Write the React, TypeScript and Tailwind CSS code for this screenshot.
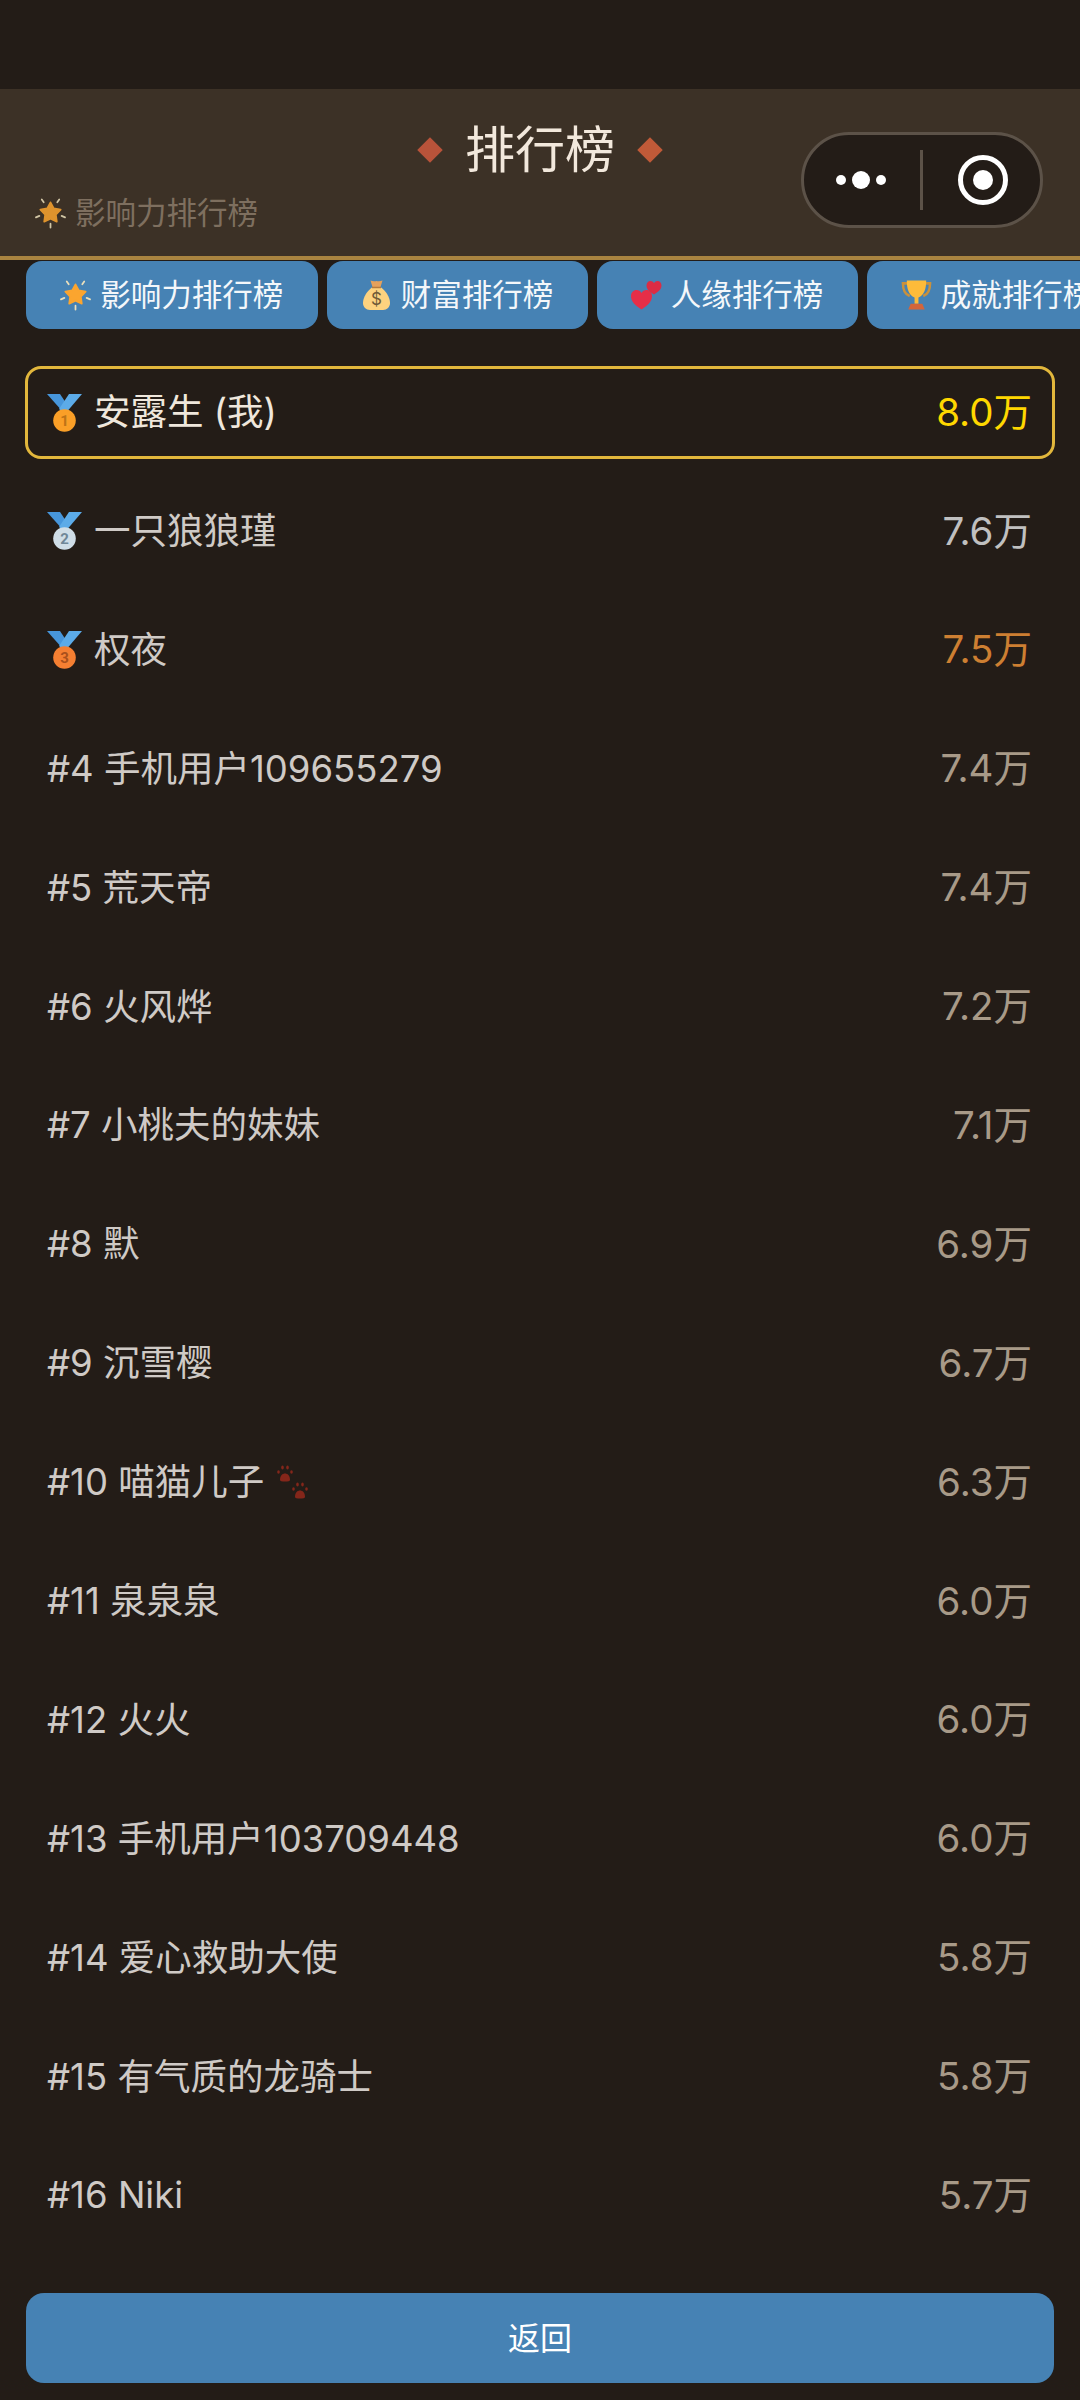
import type { ReactNode } from 'react';

const FONT = "font-['Inter','Noto_Sans_CJK_SC',sans-serif]";

function StarIcon() {
  return (
    <svg width={31} height={32} viewBox="0 0 32 32" className="shrink-0">
      <path
        d="M16 5l3.400 6.300 7.100 1.300-5 5.200 1 7.100L16 21.800l-6.500 3.100 1-7.100-5-5.200 7.100-1.300z"
        fill="#fba52f"
        stroke="#fba52f"
        strokeWidth="1.800"
        strokeLinejoin="round"
      />
      <g stroke="#ece0bc" strokeWidth="1.800" strokeLinecap="round">
        <path d="M7 2l2 3" />
        <path d="M25 2l-2 3" />
        <path d="M1 20.500l3.500-1.500" />
        <path d="M31 20.500L27.500 19" />
        <path d="M16 27v4" />
      </g>
    </svg>
  );
}

function BagIcon() {
  return (
    <svg width={31} height={32} viewBox="0 0 31 32" className="shrink-0">
      <path d="M9.500 1.500c2 .8 4 .8 6 .5 2 .3 4 .3 6-.5L19.500 8h-8z" fill="#e5a15c" />
      <path d="M11.500 8h8c5 3.500 9.500 10 9.500 16 0 4-3 7-7 7H9c-4 0-7-3-7-7 0-6 4.500-12.500 9.500-16z" fill="#fdd27f" />
      <path d="M11 8.500h9" stroke="#b57a3d" strokeWidth="1.500" />
      <text x="15.500" y="26" textAnchor="middle" fontSize="17" fill="#6f5a38" fontFamily="Inter, sans-serif">$</text>
    </svg>
  );
}

function HeartsIcon() {
  return (
    <svg width={31} height={32} viewBox="0 0 31 32" className="shrink-0">
      <path d="M10.500 30.500C4.500 26.500 0 23 0 17c0-3.600 2.600-6 5.500-6 2.200 0 4 1 5 3 1-2 2.800-3 5-3 2.900 0 5.500 2.400 5.500 6 0 6-4.500 9.500-10.500 13.500z" fill="#e62e48" />
      <path d="M23 15.500c-4-2.600-7.500-5-7.500-9 0-2.500 1.800-4.500 3.900-4.500 1.600 0 2.800.8 3.600 2.200.8-1.400 2-2.200 3.600-2.200 2.100 0 3.900 2 3.900 4.500 0 4-3.500 6.400-7.500 9z" fill="#dc2c44" />
    </svg>
  );
}

function TrophyIcon() {
  return (
    <svg width={31} height={32} viewBox="0 0 32 32" className="shrink-0">
      <path d="M8 4H2c0 7 1.500 11 7 13M24 4h6c0 7-1.500 11-7 13" fill="none" stroke="#c9913c" strokeWidth="2.600" />
      <path d="M6 1h20c0 9-2 15-8 17.500V25h-4v-6.500C8 16 6 10 6 1z" fill="#fdbb3a" />
      <path d="M10 25h12l2.500 6h-17z" fill="#d4653a" />
    </svg>
  );
}

function MedalIcon({ place }: { place: 1 | 2 | 3 }) {
  const disc = { 1: '#fa9f27', 2: '#cfdde6', 3: '#f57f32' }[place];
  const digit = { 1: '#bd7417', 2: '#6f8797', 3: '#a9501c' }[place];
  return (
    <svg width={35} height={38} viewBox="0 0 35 38" className="shrink-0">
      <path d="M0 0h13l6 9-3 9z" fill="#4796db" />
      <path d="M35 0H22L12 15l6 5z" fill="#5cabe8" />
      <circle cx="17.500" cy="26.500" r="11.300" fill={disc} />
      <text x="17.500" y="32" textAnchor="middle" fontSize="15" fontWeight="700" fill={digit} fontFamily="Roboto, sans-serif">{place}</text>
    </svg>
  );
}

function Paw({ x, y }: { x: number; y: number }) {
  return (
    <g transform={`translate(${x} ${y})`} fill="#84261a">
      <path d="M3 15c0-4.500 2.500-6.500 5-6.500s5 2 5 6.500c0 1.500-2 1.500-5 1.500S3 16.500 3 15z" />
      <ellipse cx="1.500" cy="7" rx="1.300" ry="1.700" />
      <ellipse cx="5.500" cy="2.500" rx="1.300" ry="1.900" />
      <ellipse cx="10.500" cy="2.500" rx="1.300" ry="1.900" />
      <ellipse cx="14.500" cy="7" rx="1.300" ry="1.700" />
    </g>
  );
}

function PawsIcon() {
  return (
    <svg width={34} height={36} viewBox="0 0 34 36" className="shrink-0">
      <Paw x={1} y={0} />
      <Paw x={16} y={17} />
    </svg>
  );
}

const tabs: { label: string; icon: ReactNode }[] = [
  { label: '影响力排行榜', icon: <StarIcon /> },
  { label: '财富排行榜', icon: <BagIcon /> },
  { label: '人缘排行榜', icon: <HeartsIcon /> },
  { label: '成就排行榜', icon: <TrophyIcon /> },
];

const rows: { rank: number; name: string; value: string; paws?: boolean }[] = [
  { rank: 1, name: '安露生 (我)', value: '8.0万' },
  { rank: 2, name: '一只狼狼瑾', value: '7.6万' },
  { rank: 3, name: '权夜', value: '7.5万' },
  { rank: 4, name: '手机用户109655279', value: '7.4万' },
  { rank: 5, name: '荒天帝', value: '7.4万' },
  { rank: 6, name: '火风烨', value: '7.2万' },
  { rank: 7, name: '小桃夫的妹妹', value: '7.1万' },
  { rank: 8, name: '默', value: '6.9万' },
  { rank: 9, name: '沉雪樱', value: '6.7万' },
  { rank: 10, name: '喵猫儿子', value: '6.3万', paws: true },
  { rank: 11, name: '泉泉泉', value: '6.0万' },
  { rank: 12, name: '火火', value: '6.0万' },
  { rank: 13, name: '手机用户103709448', value: '6.0万' },
  { rank: 14, name: '爱心救助大使', value: '5.8万' },
  { rank: 15, name: '有气质的龙骑士', value: '5.8万' },
  { rank: 16, name: 'Niki', value: '5.7万' },
];

function valueColor(rank: number) {
  if (rank === 1) return 'text-[#ffd700]';
  if (rank === 2) return 'text-[#c0c0c0]';
  if (rank === 3) return 'text-[#cd7f32]';
  return 'text-[#a89a88]';
}

export default function App() {
  return (
    <div className={`${FONT} w-[1080px] h-[2400px] bg-[#231c17] flex flex-col overflow-hidden`}>
      <div className="h-[89px] shrink-0" />

      {/* Header */}
      <header className="relative h-[171px] shrink-0 bg-[#3c3126] border-b-4 border-[#a98440]">
        <div className="flex items-center justify-center gap-[26px] pt-[27px]">
          <span className="w-[18px] h-[18px] rotate-45 bg-[#b8533a]" />
          <h1 className="text-[50px] leading-[68px] text-[#f2e8dc]">排行榜</h1>
          <span className="w-[18px] h-[18px] rotate-45 bg-[#c05a38]" />
        </div>
        <div className="flex items-center gap-[9px] pl-[35px] pt-[8px]">
          <span className="opacity-85">
            <StarIcon />
          </span>
          <span className="text-[30.5px] leading-[42px] text-[#7e6f5f]">影响力排行榜</span>
        </div>
        {/* wechat capsule */}
        <div className="absolute left-[801px] top-[43px] w-[242px] h-[96px] rounded-full bg-[#231c17] border-[3px] border-[#5c5248] flex items-center">
          <div className="flex-1 flex items-center justify-center gap-[6px] pr-[2px]">
            <span className="w-[10px] h-[10px] rounded-full bg-white" />
            <span className="w-[18px] h-[18px] rounded-full bg-white" />
            <span className="w-[10px] h-[10px] rounded-full bg-white" />
          </div>
          <span className="w-[3px] h-[60px] bg-[#5c5248]" />
          <div className="flex-1 flex items-center justify-center pl-[4px]">
            <span className="w-[50px] h-[50px] rounded-full border-[5px] border-white flex items-center justify-center">
              <span className="w-[20px] h-[20px] rounded-full bg-white" />
            </span>
          </div>
        </div>
      </header>

      {/* Tabs */}
      <nav className="flex gap-[9px] pl-[26px] pt-[1px] overflow-hidden shrink-0">
        {tabs.map(tab => (
          <div
            key={tab.label}
            className="h-[68px] shrink-0 px-[34.25px] rounded-[16px] bg-[#4682b4] flex items-center gap-[9px] text-[30.5px] text-[#f4f7fa]"
          >
            {tab.icon}
            <span>{tab.label}</span>
          </div>
        ))}
      </nav>

      {/* Ranking list */}
      <main className="flex-1 px-[25px] pt-[37px]">
        {rows.map(row => (
          <div
            key={row.rank}
            className={`h-[93px] mb-[25.9px] pl-[19px] pr-[20px] rounded-[16px] border-[3px] flex items-center justify-between ${
              row.rank === 1 ? 'border-[#e2b73c]' : 'border-transparent'
            }`}
          >
            <div className={`flex items-center gap-[12px] text-[36.5px] ${row.rank === 1 ? 'text-[#efe7dc]' : 'text-[#cfcac6]'}`}>
              {row.rank === 1 && <MedalIcon place={1} />}
              {row.rank === 2 && <MedalIcon place={2} />}
              {row.rank === 3 && <MedalIcon place={3} />}
              <span>
                {row.rank > 3 && `#${row.rank} `}
                {row.name}
              </span>
              {row.paws && <PawsIcon />}
            </div>
            <span className={`text-[38.5px] ${valueColor(row.rank)}`}>{row.value}</span>
          </div>
        ))}
      </main>

      {/* Back button */}
      <div className="px-[26px] pb-[17px] shrink-0">
        <button className="w-full h-[90px] pt-[2px] rounded-[18px] bg-[#4682b4] text-[32px] text-white">返回</button>
      </div>
    </div>
  );
}
